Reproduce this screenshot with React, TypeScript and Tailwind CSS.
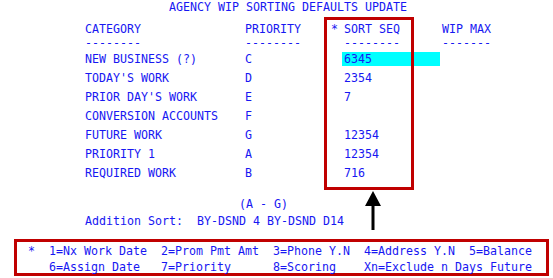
import React from "react";

const rows: [string, string, string][] = [
  ["NEW BUSINESS (?)", "C", "6345"],
  ["TODAY'S WORK", "D", "2354"],
  ["PRIOR DAY'S WORK", "E", "7"],
  ["CONVERSION ACCOUNTS", "F", ""],
  ["FUTURE WORK", "G", "12354"],
  ["PRIORITY 1", "A", "12354"],
  ["REQUIRED WORK", "B", "716"],
];

function Row({ a, b, c, d, e, cls = "h-[19px] leading-[19px]" }: { a: string; b: string; c: string; d: React.ReactNode; e: string; cls?: string }) {
  return (
    <div className={`flex ${cls}`}>
      <div className="w-[160px] shrink-0">{a}</div>
      <div className="w-[86px] shrink-0">{b}</div>
      <div className="w-[11px] shrink-0">{c}</div>
      <div className="w-[100px] shrink-0">{d}</div>
      <div className="flex-1">{e}</div>
    </div>
  );
}

export default function App() {
  return (
    <div
      className="relative w-[553px] h-[278px] bg-white overflow-hidden text-[#1717f2] text-[11.63px] whitespace-pre"
      style={{ fontFamily: '"DejaVu Sans Mono", "Liberation Mono", monospace' }}
    >
      <div className="pl-[85px]">
        <div className="h-[14px] leading-[14px] pl-[84px]">AGENCY WIP SORTING DEFAULTS UPDATE</div>
        <div className="mt-[9px]">
          <Row cls="h-[13px] leading-[13px]" a="CATEGORY" b="PRIORITY" c="*" d={<span className="pl-[2px]">SORT SEQ</span>} e="WIP MAX" />
          <Row cls="h-[14px] leading-[14px]" a="--------" b="--------" c="" d={<span className="pl-[2px]">--------</span>} e="-------" />
        </div>
        <div>
          {rows.map(([a, b, c], i) => (
            <Row
              key={i}
              a={a}
              b={b}
              c=""
              d={
                i === 0 ? (
                  <div className="mt-[2px] h-[14px] leading-[14px] w-[98px] bg-[#00ffff] pl-[2px]">{c}</div>
                ) : (
                  <span className="pl-[2px]">{c}</span>
                )
              }
              e=""
            />
          ))}
        </div>
        <div className="mt-[13px] h-[17px] leading-[17px] pl-[154px]">(A - G)</div>
        <div className="h-[17px] leading-[17px]">Addition Sort:  BY-DSND 4 BY-DSND D14</div>
      </div>

      <div className="mt-[9px] ml-[14px] w-[535px] h-[37px] border-[3px] border-[#c00000] pl-[11px] pt-[1px] leading-[16px]">
        <div className="h-[16px]">*  1=Nx Work Date  2=Prom Pmt Amt  3=Phone Y.N  4=Address Y.N  5=Balance</div>
        <div className="h-[16px]">   6=Assign Date   7=Priority      8=Scoring    Xn=Exclude n Days Future</div>
      </div>

      <div className="absolute left-[324px] top-[17px] w-[90px] h-[173px] border-[3px] border-[#c00000]" />
      <svg className="absolute left-[364px] top-[190px]" width="18" height="41" viewBox="0 0 18 41">
        <polygon points="9,1 1,16 17,16" fill="#000" />
        <rect x="7.5" y="15" width="3" height="25" fill="#000" />
      </svg>
    </div>
  );
}
